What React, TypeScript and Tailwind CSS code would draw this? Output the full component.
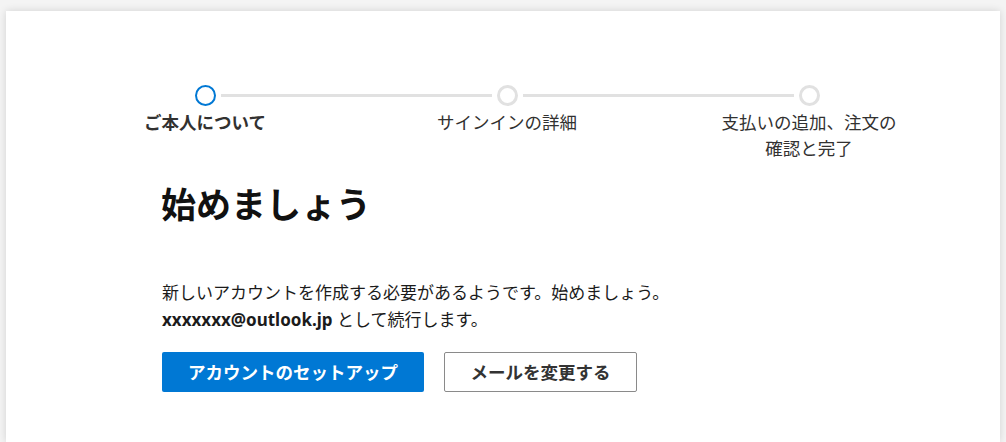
const font = { fontFamily: '"Noto Sans", "Noto Sans CJK JP", sans-serif' }

const steps = [
    { label: 'ご本人について', active: true },
    { label: 'サインインの詳細', active: false },
    { label: '支払いの追加、注文の確認と完了', active: false },
]

const Stepper = () => {
    return (
        <div className="grid grid-cols-[302px_302px_302px] ml-[48px]">
            {steps.map((step, i) => (
                <div key={i} className="flex flex-col items-center">
                    <div className="flex items-center w-full h-[21px]">
                        <div className={`flex-1 h-[3px] mr-[5px] ${i > 0 ? 'bg-[#e1e1e1]' : ''}`} />
                        <div
                            className={`w-[21px] h-[21px] rounded-full ${step.active ? 'border-2 border-[#0078d4]' : 'border-[3px] border-[#e1e1e1]'}`}
                        />
                        <div className={`flex-1 h-[3px] ml-[5px] ${i < 2 ? 'bg-[#e1e1e1]' : ''}`} />
                    </div>
                    <div
                        className={`mt-[3px] max-w-[180px] text-center text-[17.5px] leading-[26px] text-[#323130] ${step.active ? 'font-bold' : ''}`}
                    >
                        {step.label}
                    </div>
                </div>
            ))}
        </div>
    )
}

const App = () => {
    return (
        <div className="h-[442px] overflow-hidden bg-[#f4f4f4] pt-[11px] px-[6px]" style={font}>
            <div className="bg-white h-full shadow-[0_0_8px_rgba(0,0,0,0.14)] pt-[74px]">
                <Stepper />
                <div className="ml-[156px] mt-[23px]">
                    <h1 className="-ml-px text-[35px] leading-[42px] font-bold text-[#111]">始めましょう</h1>
                    <div className="mt-[53px] text-[17px] leading-[27px] text-[#1b1b1b]">
                        <p>新しいアカウントを作成する必要があるようです。始めましょう。</p>
                        <p>
                            <span className="font-bold">xxxxxxx@outlook.jp</span> として続行します。
                        </p>
                    </div>
                    <div className="flex gap-[20px] mt-[19px]">
                        <button className="w-[262px] h-[40px] rounded-[2px] bg-[#0078d4] text-white font-bold text-[17.5px]">
                            アカウントのセットアップ
                        </button>
                        <button className="w-[193px] h-[40px] rounded-[2px] border border-[#8a8a8a] bg-white text-[#333] font-bold text-[17.5px]">
                            メールを変更する
                        </button>
                    </div>
                </div>
            </div>
        </div>
    )
}

export default App
